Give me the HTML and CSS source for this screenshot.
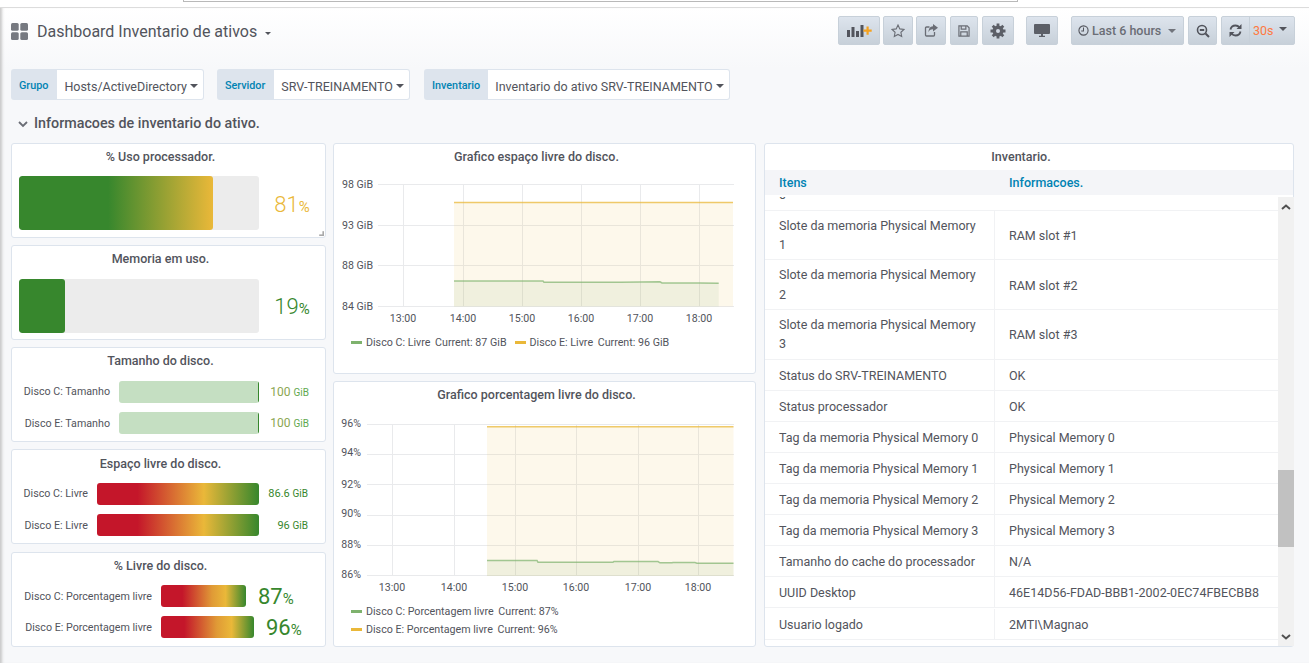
FILE: index.html
```html
<!DOCTYPE html>
<html lang="pt">
<head>
<meta charset="utf-8">
<title>Dashboard Inventario de ativos</title>
<link rel="stylesheet" href="styles.css">
</head>
<body>
<div class="browser-strip"><div class="browser-box"></div></div>
<div class="app">
  <header class="navbar">
    <div class="nav-title">
      <svg class="grid-icon" width="17" height="17" viewBox="0 0 17 17"><rect x="0" y="0" width="7.700" height="7.700" rx="1.500"/><rect x="9.300" y="0" width="7.700" height="7.700" rx="1.500"/><rect x="0" y="9.300" width="7.700" height="7.700" rx="1.500"/><rect x="9.300" y="9.300" width="7.700" height="7.700" rx="1.500"/></svg>
      <span class="nav-name">Dashboard Inventario de ativos</span>
      <span class="caret caret-nav"></span>
    </div>
    <div class="nav-actions">
      <div class="nav-group">
        <button class="btn btn-add"><svg width="28" height="14" viewBox="0 0 28 14"><path fill="#52545c" d="M2 6h3v7H2zM6.500 3h3v10h-3zM11 7h3v6h-3zM15.500 1h3v12h-3z"/><path fill="#f6a21e" d="M21.500 2.500h2.200v3h3v2.200h-3v3h-2.200v-3h-3V5.500h3z"/></svg></button>
        <button class="btn btn-star"><svg width="14" height="14" viewBox="0 0 14 14"><path fill="none" stroke="#6a6d75" stroke-width="1.100" d="M7 1l1.800 3.900 4.200.5-3.100 2.900.8 4.200L7 10.400l-3.700 2.100.8-4.200L1 5.400l4.200-.5z"/></svg></button>
        <button class="btn btn-share"><svg width="14" height="13" viewBox="0 0 14 13"><path fill="none" stroke="#6a6d75" stroke-width="1.300" d="M10.500 8v3a1 1 0 0 1-1 1h-7a1 1 0 0 1-1-1V4a1 1 0 0 1 1-1h3"/><path fill="#6a6d75" d="M9 0l5 3.700-5 3.700V5.300c-2.500 0-4 1-4.500 3C4.500 4.800 6 2.400 9 2.200z"/></svg></button>
        <button class="btn btn-save"><svg width="12" height="12" viewBox="0 0 13 13"><path fill="none" stroke="#6a6d75" stroke-width="1.300" d="M1 1h9l2 2v9H1z"/><path fill="none" stroke="#6a6d75" stroke-width="1.300" d="M3.500 1v3.500h5V1M3 12V7.500h7V12"/></svg></button>
        <button class="btn btn-cog"><svg width="16" height="16" viewBox="0 0 16 16"><path stroke="#5c5f67" stroke-width="2.800" d="M8 .5v15M.5 8h15M2.700 2.700l10.600 10.600M13.300 2.700L2.700 13.300"/><circle cx="8" cy="8" r="5.500" fill="#5c5f67"/><circle cx="8" cy="8" r="2" fill="#d3dae4"/></svg></button>
      </div>
      <button class="btn btn-monitor"><svg width="16" height="13" viewBox="0 0 16 13"><path fill="#5c5f67" d="M0 1a1 1 0 0 1 1-1h14a1 1 0 0 1 1 1v8a1 1 0 0 1-1 1H1a1 1 0 0 1-1-1zM5 11.800h6V13H5z"/><path fill="#5c5f67" d="M7 9h2v3H7z"/></svg></button>
      <button class="btn btn-time"><svg width="11" height="11" viewBox="0 0 12 12"><circle cx="6" cy="6" r="5" fill="none" stroke="#52545c" stroke-width="1.200"/><path fill="none" stroke="#52545c" stroke-width="1.100" d="M6 2.800V6.500H3.500"/></svg><span>Last 6 hours</span><span class="caret caret-time"></span></button>
      <button class="btn btn-zoom"><svg width="14" height="14" viewBox="0 0 14 14"><circle cx="6" cy="6" r="4.500" fill="none" stroke="#52545c" stroke-width="1.600"/><path stroke="#52545c" stroke-width="2" d="M9.500 9.500l3.500 3.500M3.800 6h4.400"/></svg></button>
      <div class="btn btn-refresh">
        <span class="refresh-icon"><svg width="13" height="13" viewBox="0 0 13 13"><path fill="none" stroke="#52545c" stroke-width="1.800" d="M1.500 5.500C2 3 4 1.500 6.500 1.500c1.700 0 3 .7 4 2M11.500 7.500C11 10 9 11.500 6.500 11.500c-1.700 0-3-.7-4-2"/><path fill="#52545c" d="M12.500 0v5h-5zM.5 13V8h5z"/></svg></span>
        <span class="refresh-value">30s<span class="caret caret-refresh"></span></span>
      </div>
    </div>
  </header>

  <section class="vars">
    <div class="var"><span class="var-label">Grupo</span><span class="var-value">Hosts/ActiveDirectory<span class="caret caret-var"></span></span></div>
    <div class="var"><span class="var-label">Servidor</span><span class="var-value">SRV-TREINAMENTO<span class="caret caret-var"></span></span></div>
    <div class="var"><span class="var-label">Inventario</span><span class="var-value">Inventario do ativo SRV-TREINAMENTO<span class="caret caret-var"></span></span></div>
  </section>

  <div class="row-head">
    <svg class="chev" width="10" height="7" viewBox="0 0 10 7"><path fill="none" stroke="#6a6d75" stroke-width="1.800" d="M1 1l4 4 4-4"/></svg>
    <span>Informacoes de inventario do ativo.</span>
  </div>

  <main class="board">
    <div class="col-gauges">
      <article class="panel gauge-panel">
        <h3 class="panel-title">% Uso processador.</h3>
        <div class="big-gauge">
          <div class="track"><div class="fill fill-cpu"></div></div>
          <div class="big-val val-yellow">81<small>%</small></div>
        </div>
        <span class="resize"></span>
      </article>
      <article class="panel gauge-panel">
        <h3 class="panel-title">Memoria em uso.</h3>
        <div class="big-gauge">
          <div class="track"><div class="fill fill-mem"></div></div>
          <div class="big-val val-green">19<small>%</small></div>
        </div>
      </article>
      <article class="panel gauge-panel">
        <h3 class="panel-title">Tamanho do disco.</h3>
        <div class="bars bars-size">
          <div class="bar-row"><span class="bar-label">Disco C: Tamanho</span><div class="h-bar size-bar"></div><span class="bar-val size-val">100 <small>GiB</small></span></div>
          <div class="bar-row"><span class="bar-label">Disco E: Tamanho</span><div class="h-bar size-bar"></div><span class="bar-val size-val">100 <small>GiB</small></span></div>
        </div>
      </article>
      <article class="panel gauge-panel">
        <h3 class="panel-title">Espaço livre do disco.</h3>
        <div class="bars bars-free">
          <div class="bar-row"><span class="bar-label">Disco C: Livre</span><div class="h-bar free-bar"></div><span class="bar-val free-val">86.6 <small>GiB</small></span></div>
          <div class="bar-row"><span class="bar-label">Disco E: Livre</span><div class="h-bar free-bar"></div><span class="bar-val free-val">96 <small>GiB</small></span></div>
        </div>
      </article>
      <article class="panel gauge-panel">
        <h3 class="panel-title">% Livre do disco.</h3>
        <div class="bars bars-pct">
          <div class="bar-row"><span class="bar-label">Disco C: Porcentagem livre</span><div class="h-bar pct-bar pct-c"></div><span class="pct-val">87<small>%</small></span></div>
          <div class="bar-row"><span class="bar-label">Disco E: Porcentagem livre</span><div class="h-bar pct-bar pct-e"></div><span class="pct-val">96<small>%</small></span></div>
        </div>
      </article>
    </div>

    <div class="col-charts">
      <article class="panel chart-panel">
        <h3 class="panel-title">Grafico espaço livre do disco.</h3>
        <svg class="chart chart-a" width="421" height="162" viewBox="334 172 421 162">
          <g class="grid"><path d="M378 184.500H734M378 225.500H734M378 265.500H734M378 306.500H734M403.500 184V306M463.500 184V306M522.500 184V306M581.500 184V306M640.500 184V306M699.500 184V306"/></g>
          <path fill="#eab839" fill-opacity=".1" d="M454 202.500H733V306.500H454z"/>
          <path fill="#7eb26d" fill-opacity=".1" d="M454 281H543L544 282.300H620L660 281.800 662 282.900H700L718.700 283.300V306.500H454z"/>
          <path class="line-e" d="M454 202.500H733"/>
          <path class="line-c" d="M454 281H543L544 282.300H620L660 281.800 662 282.900H700L718.700 283.300"/>
          <g class="axis">
            <text x="373" y="187.500" text-anchor="end">98 GiB</text>
            <text x="373" y="228.500" text-anchor="end">93 GiB</text>
            <text x="373" y="268.500" text-anchor="end">88 GiB</text>
            <text x="373" y="309.500" text-anchor="end">84 GiB</text>
            <text x="403" y="322" text-anchor="middle">13:00</text>
            <text x="463" y="322" text-anchor="middle">14:00</text>
            <text x="522" y="322" text-anchor="middle">15:00</text>
            <text x="581" y="322" text-anchor="middle">16:00</text>
            <text x="640" y="322" text-anchor="middle">17:00</text>
            <text x="699" y="322" text-anchor="middle">18:00</text>
          </g>
        </svg>
        <div class="legend legend-inline">
          <span class="leg"><i class="swatch sw-c"></i>Disco C: Livre <span class="leg-cur">Current: 87 GiB</span></span>
          <span class="leg"><i class="swatch sw-e"></i>Disco E: Livre <span class="leg-cur">Current: 96 GiB</span></span>
        </div>
      </article>
      <article class="panel chart-panel">
        <h3 class="panel-title">Grafico porcentagem livre do disco.</h3>
        <svg class="chart chart-b" width="421" height="185" viewBox="334 410 421 185">
          <g class="grid"><path d="M367 423.500H734M367 453.500H734M367 483.500H734M367 514.500H734M367 544.500H734M367 574.500H734M392.500 423V575M454.500 423V575M515.500 423V575M576.500 423V575M638.500 423V575M698.500 423V575"/></g>
          <path fill="#eab839" fill-opacity=".1" d="M487 425.700H733.500V575H487z"/>
          <path fill="#7eb26d" fill-opacity=".1" d="M487 559.400H537L538 561.200H613L614 560.500H658L660 561.800H672L673 561.500H695L697 562.200H733.500V575H487z"/>
          <path class="line-e" d="M487 425.700H733.500"/>
          <path class="line-c" d="M487 559.400H537L538 561.200H613L614 560.500H658L660 561.800H672L673 561.500H695L697 562.200H733.500"/>
          <g class="axis">
            <text x="361" y="425.500" text-anchor="end">96%</text>
            <text x="361" y="454.500" text-anchor="end">94%</text>
            <text x="361" y="486.500" text-anchor="end">92%</text>
            <text x="361" y="515.500" text-anchor="end">90%</text>
            <text x="361" y="547" text-anchor="end">88%</text>
            <text x="361" y="577" text-anchor="end">86%</text>
            <text x="392" y="590" text-anchor="middle">13:00</text>
            <text x="454" y="590" text-anchor="middle">14:00</text>
            <text x="515" y="590" text-anchor="middle">15:00</text>
            <text x="576" y="590" text-anchor="middle">16:00</text>
            <text x="638" y="590" text-anchor="middle">17:00</text>
            <text x="698" y="590" text-anchor="middle">18:00</text>
          </g>
        </svg>
        <div class="legend legend-stack">
          <span class="leg"><i class="swatch sw-c"></i>Disco C: Porcentagem livre <span class="leg-cur">Current: 87%</span></span>
          <span class="leg"><i class="swatch sw-e"></i>Disco E: Porcentagem livre <span class="leg-cur">Current: 96%</span></span>
        </div>
      </article>
    </div>

    <article class="panel table-panel">
      <h3 class="panel-title">Inventario.</h3>
      <div class="thead"><span class="cell">Itens</span><span class="cell">Informacoes.</span></div>
      <div class="tscroll">
        <div class="tbody">
          <div class="trow-cut"><span class="cell-cut">0</span></div>
          <div class="trow two"><span class="cell">Slote da memoria Physical Memory 1</span><span class="cell">RAM slot #1</span></div>
          <div class="trow two"><span class="cell">Slote da memoria Physical Memory 2</span><span class="cell">RAM slot #2</span></div>
          <div class="trow two"><span class="cell">Slote da memoria Physical Memory 3</span><span class="cell">RAM slot #3</span></div>
          <div class="trow"><span class="cell">Status do SRV-TREINAMENTO</span><span class="cell">OK</span></div>
          <div class="trow"><span class="cell">Status processador</span><span class="cell">OK</span></div>
          <div class="trow"><span class="cell">Tag da memoria Physical Memory 0</span><span class="cell">Physical Memory 0</span></div>
          <div class="trow"><span class="cell">Tag da memoria Physical Memory 1</span><span class="cell">Physical Memory 1</span></div>
          <div class="trow"><span class="cell">Tag da memoria Physical Memory 2</span><span class="cell">Physical Memory 2</span></div>
          <div class="trow"><span class="cell">Tag da memoria Physical Memory 3</span><span class="cell">Physical Memory 3</span></div>
          <div class="trow"><span class="cell">Tamanho do cache do processador</span><span class="cell">N/A</span></div>
          <div class="trow"><span class="cell">UUID Desktop</span><span class="cell">46E14D56-FDAD-BBB1-2002-0EC74FBECBB8</span></div>
          <div class="trow trow-last"><span class="cell">Usuario logado</span><span class="cell">2MTI\Magnao</span></div>
        </div>
        <div class="scrollbar">
          <svg width="10" height="6" viewBox="0 0 10 6"><path fill="none" stroke="#505050" stroke-width="2" d="M1 5l4-3.500L9 5"/></svg>
          <div class="scroll-track"><div class="scroll-thumb"></div></div>
          <svg width="10" height="6" viewBox="0 0 10 6"><path fill="none" stroke="#505050" stroke-width="2" d="M1 1l4 3.500L9 1"/></svg>
        </div>
      </div>
    </article>
  </main>
</div>
</body>
</html>
```
FILE: styles.css
```css
* { box-sizing: border-box; }
html, body { margin: 0; padding: 0; height: 100%; overflow: hidden; }
body { background: #f7f8fa; font-family: Roboto, "Liberation Sans", sans-serif; color: #52545c; font-size: 12.500px; }

.browser-strip { height: 8px; background: #fff; border-bottom: 1px solid #dcdcdc; padding-left: 183px; }
.browser-box { width: 835px; height: 2px; background: #fff; border-bottom: 1px solid #b9b9b9; border-left: 1px solid #b9b9b9; border-right: 1px solid #b9b9b9; }

.app { height: 655px; box-shadow: inset 4px 0 3px -2px #c8c8c8; padding-left: 11px; padding-right: 14px; background: linear-gradient(#fff 0, #f7f8fa 60px); }

.navbar { height: 52px; padding-top: 8px; display: flex; justify-content: space-between; align-items: flex-start; }
.nav-title { display: flex; align-items: center; height: 29px; margin-top: 1px; }
.grid-icon { fill: #767980; margin-top: -1px; }
.nav-name { font-size: 16px; color: #52545c; margin-left: 9px; }
.caret { display: inline-block; width: 0; height: 0; border-style: solid; border-color: #52545c transparent transparent; }
.caret-nav { border-width: 3px 3px 0; margin-left: 8px; margin-top: 3px; }

.nav-actions { display: flex; gap: 12px; }
.nav-group { display: flex; gap: 3px; }
.btn { height: 29px; border: 1px solid #c7d0d9; border-radius: 2px; background: linear-gradient(#dde4ed, #c7d0d9); color: #52545c; font: 500 12.500px Roboto, sans-serif; display: flex; align-items: center; justify-content: center; padding: 0; }
.btn-add { width: 42px; }
.btn-star, .btn-share { width: 30px; }
.btn-save { width: 28px; margin-left: 1px; }
.btn-cog { width: 32px; margin-left: 1px; }
.btn-monitor { width: 32px; }
.btn-time { width: 113px; margin-left: 1px; gap: 3px; padding-left: 6px; justify-content: flex-start; color: #6a6d75; }
.caret-time { border-width: 4px 4px 0; margin-left: 4px; border-top-color: #71747c; }
.btn-zoom { width: 29px; margin-left: -8px; }
.btn-refresh { width: 74px; margin-left: -8px; justify-content: flex-start; }
.refresh-icon { width: 28px; height: 100%; display: flex; align-items: center; justify-content: center; border-right: 1px solid #c7d0d9; }
.refresh-value { color: #ff7941; padding-left: 3px; display: flex; align-items: center; font-weight: 400; }
.caret-refresh { border-width: 4px 4px 0; border-top-color: #52545c; margin-left: 5px; margin-top: -3px; }

.vars { display: flex; gap: 13px; margin-top: 9px; height: 31px; }
.var { display: flex; height: 31px; }
.var:last-child { margin-left: 1px; }
.var-label { background: #dde4ed; color: #0083b3; font-size: 10.800px; font-weight: 500; display: flex; align-items: center; padding: 2px 9px 0 8px; border-radius: 3px 0 0 3px; }
.var:last-child .var-label { padding-right: 8px; }
.var-value { background: #fff; border: 1px solid #dde4ed; border-left: 0; border-radius: 0 3px 3px 0; color: #52545c; font-size: 12.500px; display: flex; align-items: center; padding: 4px 5px 0 7px; }
.caret-var { border-width: 4px 4px 0; margin-left: 3px; margin-top: -2px; }

.row-head { display: flex; align-items: center; height: 20px; margin-top: 13px; font-size: 14.300px; font-weight: 500; color: #52545c; }
.chev { margin-left: 7px; margin-right: 6px; margin-top: 3px; }

.board { display: grid; grid-template-columns: 315px 423px 531px; column-gap: 7px; margin-top: 10px; height: 504px; }
.board > .table-panel { margin-left: 1px; }

.panel { background: #fff; border: 1px solid #dde4ed; border-radius: 3px; position: relative; }
.panel-title { margin: 0; text-align: center; font-size: 12.500px; font-weight: 500; color: #52545c; line-height: 16px; padding: 5px 16px 0 0; }

.col-gauges { display: grid; grid-template-rows: 95px 95px 95px 95px 96px; row-gap: 7px; }
.col-gauges > .panel:last-child { margin-top: 1px; }
.gauge-panel { overflow: hidden; }
.gauge-panel:nth-child(4) .panel-title { padding-top: 6px; }

.big-gauge { display: flex; align-items: center; margin: 12px 0 0 7px; }
.gauge-panel:first-child .big-gauge { margin-top: 11px; }
.track { width: 240px; height: 54px; background: #ececec; border-radius: 3px; overflow: hidden; }
.fill { height: 100%; border-radius: 3px; }
.fill-cpu { width: 194px; background: linear-gradient(90deg, #37872d 0, #37872d 46%, #eab839 100%); }
.fill-mem { width: 46px; background: #37872d; }
.big-val { flex: 1; text-align: center; font-size: 22px; font-weight: 300; }
.big-val small { font-size: 15px; font-weight: 400; }
.val-yellow { color: #eab839; padding-top: 2px; }
.val-green { color: #37872d; }
.resize { position: absolute; right: 1px; bottom: 1px; width: 6px; height: 6px; border-right: 2px solid #a9a9a9; border-bottom: 2px solid #a9a9a9; transform-origin: bottom right; transform: scale(.8); }

.bars { display: flex; flex-direction: column; gap: 9px; margin-top: 12px; }
.bar-row { display: flex; align-items: center; height: 22px; font-size: 10.700px; }
.bar-label { color: #52545c; text-align: right; flex: none; }
.bars-size .bar-row:first-child .bar-label,
.bars-free .bar-row:first-child .bar-label,
.bars-free .bar-row:first-child .bar-val { margin-bottom: 2px; }
.h-bar { height: 22px; border-radius: 3px; flex: none; }
.bars-size .bar-label { width: 98px; }
.bars-size .h-bar { width: 140px; margin-left: 9px; }
.size-bar { background: linear-gradient(90deg, #c5dfc2 0, #c5dfc2 99%, #37872d 99.200%); }
.bar-val { flex: none; text-align: right; font-size: 12px; white-space: nowrap; }
.bar-val small { font-size: 10px; }
.bars-size .bar-val { width: 50px; color: #8ba651; }
.bars-size .bar-val small { color: #5fa84e; }
.bars-free { gap: 9px; margin-top: 11px; }
.bars-free .bar-label { width: 76px; }
.bars-free .h-bar { width: 162px; margin-left: 9px; }
.free-bar { background: linear-gradient(90deg, #c4162a 0, #c4162a 25%, #eab839 66%, #37872d 100%); }
.bars-free .bar-val { width: 49px; color: #37872d; font-size: 11px; }
.bars-pct { margin-top: 11px; gap: 9px; }
.bars-pct .bar-label { width: 140px; }
.bars-pct .h-bar { margin-left: 9px; }
.pct-bar { background: linear-gradient(90deg, #c4162a 0, #c4162a 25%, #e09a36 60%, #eab839 76%, #37872d 100%); }
.pct-c { width: 85px; }
.pct-e { width: 93px; }
.pct-val { font-size: 22px; color: #37872d; margin-left: 12px; white-space: nowrap; }
.pct-val small { font-size: 15px; }

.col-charts { display: grid; grid-template-rows: 231px 266px; row-gap: 7px; }
.chart { display: block; }
.chart-a { margin-top: 7px; }
.chart-b { margin-top: 8px; }
.grid path { fill: none; stroke: #e9eaec; stroke-width: 1; }
.line-e { fill: none; stroke: #eab839; stroke-width: 1.500; stroke-opacity: .75; }
.line-c { fill: none; stroke: #7eb26d; stroke-width: 1.500; stroke-opacity: .7; }
.axis text { font: 10.600px Roboto, sans-serif; fill: #52545c; }

.legend { font-size: 10.700px; color: #52545c; padding-left: 17px; }
.legend-inline { display: flex; gap: 8px; margin-top: 2px; }
.legend-stack { display: flex; flex-direction: column; gap: 5px; margin-top: 9px; }
.leg { display: flex; align-items: center; white-space: pre; height: 13px; }
.leg-cur { margin-left: 2px; }
.swatch { display: inline-block; width: 11px; height: 2.500px; margin-right: 4px; }
.sw-c { background: #7eb26d; }
.sw-e { background: #eab839; }

.table-panel { display: flex; flex-direction: column; min-height: 0; }
.thead { display: flex; height: 25px; background: #f4f5f8; color: #0083b3; font-weight: 500; font-size: 12.500px; align-items: center; margin-top: 5px; flex: none; }
.thead .cell:first-child, .trow .cell:first-child { width: 230px; padding: 0 14px; flex: none; }
.thead .cell:last-child, .trow .cell:last-child { padding-left: 14px; }
.tscroll { display: flex; flex: 1; min-height: 0; overflow: hidden; margin: 2px -1px 0 0; }
.tbody { flex: 1; min-width: 0; }
.trow-cut { height: 13.700px; overflow: hidden; border-bottom: 1px solid #f1f2f4; padding-left: 14px; line-height: 19.350px; }
.cell-cut { display: block; margin-top: -11.600px; }
.trow { display: flex; align-items: center; border-bottom: 1px solid #f1f2f4; min-height: 31px; line-height: 19.350px; padding: 6px 0 4px; }
.trow .cell:first-child { border-right: 1px solid #f1f2f4; align-self: stretch; margin: -6px 0 -4px; padding-top: 6px; padding-bottom: 4px; display: flex; align-items: center; }
.trow.two { padding: 5.500px 0 4.500px; }
.trow.two .cell:first-child { margin: -5.500px 0 -4.500px; padding-top: 5px; padding-bottom: 5px; }
.trow-last { margin-top: 1px; }
.scrollbar { width: 16px; flex: none; background: #f1f1f1; display: flex; flex-direction: column; align-items: center; padding: 7px 0 6px; gap: 3px; }
.scroll-track { flex: 1; width: 100%; padding-top: 257px; }
.scroll-thumb { height: 77px; background: #c1c1c1; }
```
